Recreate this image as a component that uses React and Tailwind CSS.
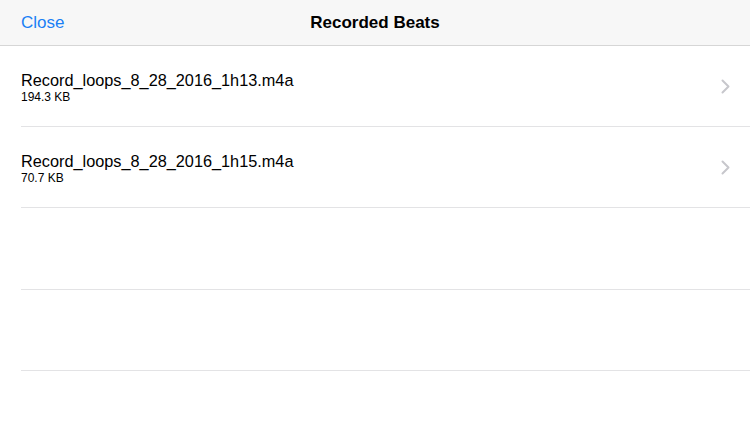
import React from "react";

const beats = [
  { name: "Record_loops_8_28_2016_1h13.m4a", size: "194.3 KB" },
  { name: "Record_loops_8_28_2016_1h15.m4a", size: "70.7 KB" },
];

function Chevron() {
  return (
    <svg width="9" height="15" viewBox="0 0 9 15" fill="none" className="shrink-0">
      <path d="M1.5 1.5 L7.5 7.5 L1.5 13.5" stroke="#c7c7cc" strokeWidth="2" strokeLinecap="round" strokeLinejoin="round" />
    </svg>
  );
}

export default function App() {
  return (
    <div className="w-[750px] h-[422px] bg-white overflow-hidden font-['Liberation_Sans',Arial,sans-serif] text-black">
      <div className="h-[46px] bg-[#f7f7f7] border-b border-[#d6d6d6] flex items-center relative">
        <button className="pl-[21px] text-[17px] text-[#1a7ff5]">Close</button>
        <h1 className="absolute left-0 right-0 text-center text-[17px] font-bold pointer-events-none">Recorded Beats</h1>
      </div>

      <div className="pl-[21px]">
        {beats.map((b) => (
          <div key={b.name} className="h-[81px] border-b border-[#e3e3e5] flex items-center pr-[20px]">
            <div className="flex-1 pt-[2px]">
              <div className="text-[16.3px] leading-[20px]">{b.name}</div>
              <div className="text-[12px] leading-[14px]">{b.size}</div>
            </div>
            <Chevron />
          </div>
        ))}
        <div className="h-[82px] border-b border-[#e3e3e5]" />
        <div className="h-[81px] border-b border-[#e3e3e5]" />
      </div>
    </div>
  );
}
